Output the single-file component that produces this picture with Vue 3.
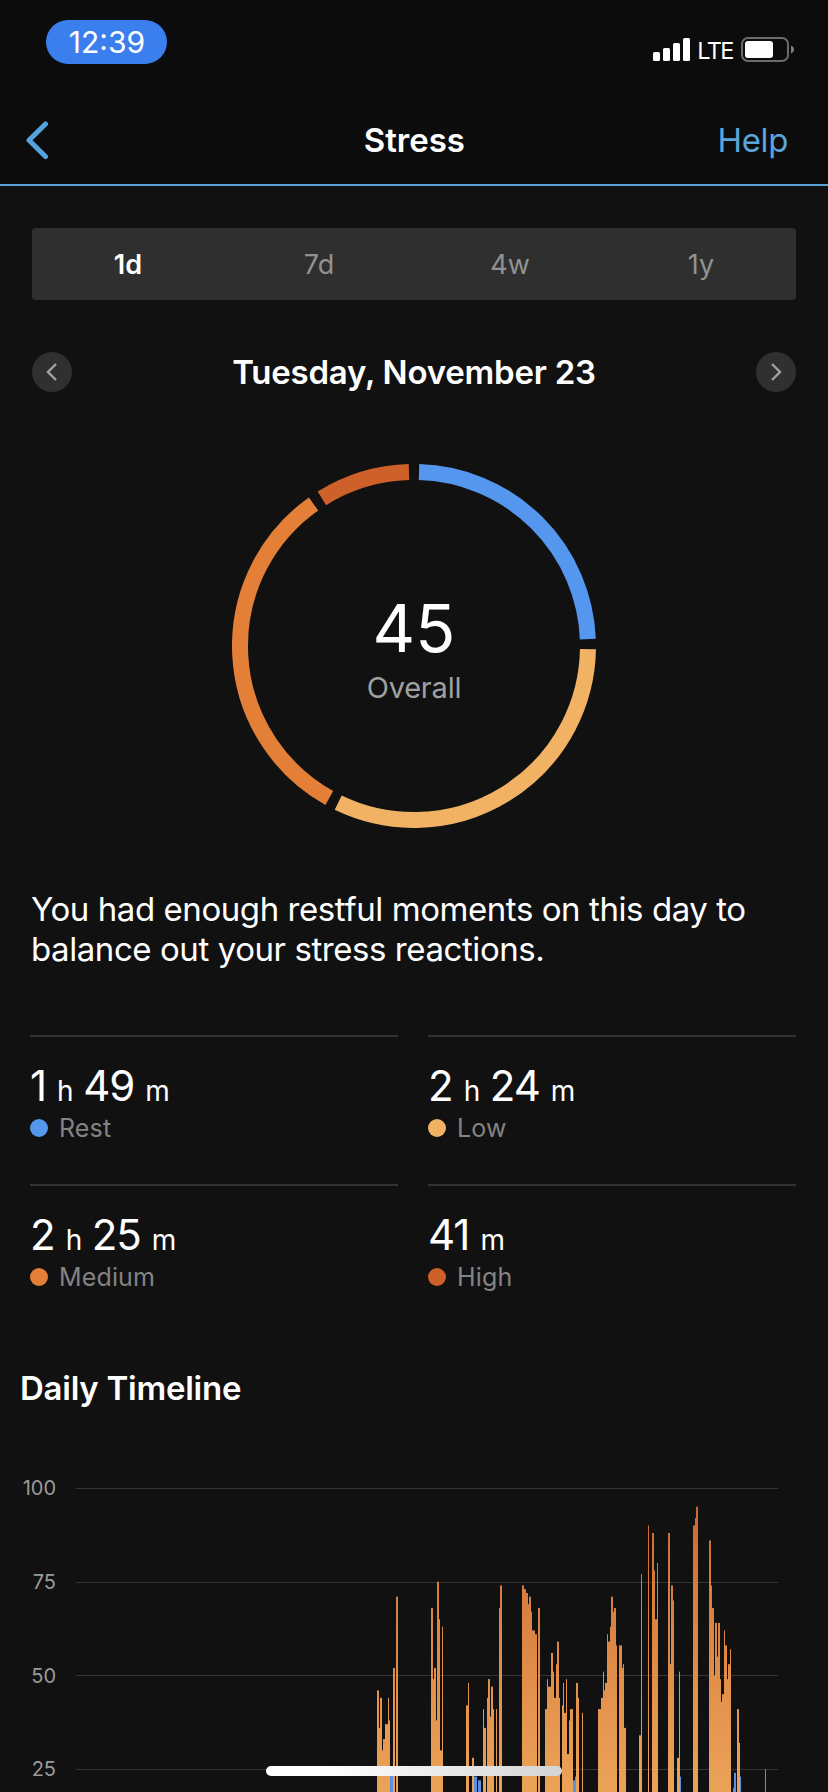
<template>
  <div class="screen">

    <!-- Status bar -->
    <div class="status-bar">
      <div class="time-pill"><span class="time">12:39</span></div>
      <div class="status-right">
        <svg class="signal" width="37" height="23" viewBox="0 0 37 23">
          <rect x="0" y="14" width="7" height="9" rx="1.5" />
          <rect x="10" y="10" width="7" height="13" rx="1.5" />
          <rect x="20" y="5" width="7" height="18" rx="1.5" />
          <rect x="30" y="0" width="7" height="23" rx="1.5" />
        </svg>
        <span class="carrier">LTE</span>
        <svg class="battery" width="54" height="25" viewBox="0 0 54 25">
          <rect x="1" y="1" width="46" height="23" rx="6" fill="none" stroke="#6b6b6b" stroke-width="2" />
          <rect x="4" y="4" width="28" height="17" rx="3" fill="#fff" />
          <path d="M50 8.5c2 .8 3 2.2 3 4s-1 3.2-3 4z" fill="#7d7d7d" />
        </svg>
      </div>
    </div>

    <!-- Navigation -->
    <div class="nav">
      <svg class="back" width="24" height="40" viewBox="0 0 24 40">
        <path d="M20.5 4L4 20.3L20.5 36.5" fill="none" stroke="#54a4dc" stroke-width="5" stroke-linecap="round" stroke-linejoin="round" />
      </svg>
      <span class="title">Stress</span>
      <span class="help">Help</span>
    </div>

    <!-- Range tabs -->
    <div class="range-tabs">
      <div
        v-for="tab in tabs"
        :key="tab"
        class="range-tab"
        :class="{ active: activeTab === tab }"
        @click="activeTab = tab"
      >
        {{ tab }}
      </div>
    </div>

    <!-- Date -->
    <div class="date-row">
      <div class="round-btn">
        <svg width="12" height="18" viewBox="0 0 12 18"><path d="M10 1L2 9L10 17" /></svg>
      </div>
      <span class="date">Tuesday, November 23</span>
      <div class="round-btn">
        <svg width="12" height="18" viewBox="0 0 12 18"><path d="M2 1L10 9L2 17" /></svg>
      </div>
    </div>

    <!-- Stress ring -->
    <div class="ring">
      <svg width="364" height="364" viewBox="0 0 364 364">
        <path
          v-for="seg in segments"
          :key="seg.label"
          :d="seg.d"
          :stroke="seg.color"
          stroke-width="16"
          fill="none"
        />
      </svg>
      <div class="ring-text">
        <div class="score">45</div>
        <div class="score-label">Overall</div>
      </div>
    </div>

    <p class="summary">You had enough restful moments on this day to balance out your stress reactions.</p>

    <!-- Durations -->
    <div class="stats">
      <div v-for="item in levels" :key="item.label" class="stat">
        <div class="stat-value">
          <template v-if="item.h"><span class="num">{{ item.h }}</span><span class="unit unit-h">h</span></template>
          <span class="num">{{ item.m }}</span><span class="unit">m</span>
        </div>
        <div class="stat-label">
          <i class="dot" :style="{ backgroundColor: item.color }"></i>
          <span>{{ item.label }}</span>
        </div>
      </div>
    </div>

    <!-- Timeline -->
    <h2 class="section-title">Daily Timeline</h2>
    <div class="chart">
      <div class="axis">
        <span v-for="n in ticks" :key="n">{{ n }}</span>
      </div>
      <svg class="plot" width="702" height="304" viewBox="0 0 702 304">
        <defs>
          <linearGradient id="stress" gradientUnits="userSpaceOnUse" x1="0" y1="0" x2="0" y2="304">
            <stop offset="0" stop-color="#cb6130" />
            <stop offset="0.35" stop-color="#d87d3f" />
            <stop offset="0.7" stop-color="#e3934c" />
            <stop offset="1" stop-color="#eba358" />
          </linearGradient>
        </defs>
        <rect v-for="n in ticks" :key="n" x="0" :y="Math.round(yOf(n))" width="702" height="1" fill="#343434" />
        <rect v-for="(b, i) in stressBars" :key="'s' + i" :x="b[0]" :y="yOf(b[2])" :width="b[1]" height="400" fill="url(#stress)" />
        <rect v-for="(b, i) in restBars" :key="'r' + i" :x="b[0]" :y="yOf(b[2])" :width="b[1]" height="400" fill="#5b92e0" />
      </svg>
    </div>

    <div class="home-indicator"></div>
  </div>
</template>

<script setup>
import { computed, ref } from 'vue';

const tabs = ['1d', '7d', '4w', '1y'];
const activeTab = ref('1d');
const ticks = [100, 75, 50, 25];

const levels = [
  { label: 'Rest', h: 1, m: 49, color: '#5596ee' },
  { label: 'Low', h: 2, m: 24, color: '#f1b264' },
  { label: 'Medium', h: 2, m: 25, color: '#e47f37' },
  { label: 'High', h: 0, m: 41, color: '#ce6029' }
];

const point = (deg) => {
  const a = (deg * Math.PI) / 180;
  return `${(182 + 174 * Math.sin(a)).toFixed(2)} ${(182 - 174 * Math.cos(a)).toFixed(2)}`;
};

// ring segments, proportional to minutes, with a small gap
const segments = computed(() => {
  const gap = 1.65;
  const minutes = levels.map(l => l.h * 60 + l.m);
  const total = minutes.reduce((a, b) => a + b, 0);
  let start = 0;
  return levels.map((l, i) => {
    const end = start + (minutes[i] / total) * 360;
    const d = `M${point(start + gap)}A174 174 0 0 1 ${point(end - gap)}`;
    start = end;
    return { label: l.label, color: l.color, d };
  });
});

const yOf = (v) => (100 - v) * 3.748;

// [x, width, stress level]
const stressBars = [
  [301, 2, 46], [303, 1, 36], [304, 2, 44], [306, 1, 30], [307, 2, 33], [309, 3, 37], [312, 1, 44], [313, 1, 38],
  [317, 2, 52], [320, 2, 71],
  [355, 2, 68], [357, 1, 49], [358, 2, 52], [360, 1, 38], [361, 2, 75], [363, 1, 65], [364, 2, 30], [366, 1, 63],
  [390, 2, 42], [392, 1, 48], [396, 2, 28],
  [407, 1, 41], [408, 2, 36], [411, 1, 44], [412, 2, 49], [414, 1, 39], [415, 2, 47], [417, 1, 41], [420, 1, 41],
  [423, 1, 68], [424, 2, 74],
  [446, 2, 74], [448, 2, 73], [450, 2, 72], [452, 1, 69], [453, 2, 71], [455, 1, 67], [456, 3, 62], [459, 2, 61], [462, 2, 68],
  [469, 2, 41], [471, 1, 49], [472, 3, 47], [475, 2, 56], [477, 1, 51], [478, 2, 44], [480, 1, 53], [481, 2, 59], [483, 1, 44],
  [486, 1, 42], [487, 1, 48], [488, 2, 40], [490, 1, 49], [491, 2, 29], [493, 1, 38], [494, 3, 41],
  [500, 2, 48], [502, 1, 44], [506, 1, 40],
  [522, 3, 41], [525, 2, 44], [527, 1, 51], [528, 1, 46], [529, 2, 48], [531, 1, 61], [532, 2, 59], [534, 1, 63], [535, 2, 71],
  [537, 1, 67], [538, 2, 68], [540, 1, 58], [543, 3, 58], [546, 1, 52], [547, 1, 53], [548, 2, 36],
  [563, 2, 34], [565, 1, 77], [572, 1, 90],
  [576, 2, 88], [578, 1, 78], [579, 2, 65], [581, 1, 80],
  [592, 2, 88], [594, 1, 53], [595, 2, 74], [597, 1, 70], [601, 2, 28], [603, 1, 51],
  [617, 2, 90], [619, 1, 92], [620, 2, 95],
  [633, 2, 86], [635, 1, 74], [636, 2, 68], [638, 1, 50], [639, 2, 64], [641, 1, 55], [642, 2, 64], [644, 1, 49], [645, 1, 43],
  [646, 2, 45], [648, 1, 62], [649, 2, 58], [651, 1, 49], [652, 2, 53], [654, 1, 57],
  [661, 2, 41], [663, 1, 32]
];

const restBars = [
  [314, 3, 25], [398, 3, 23], [402, 3, 22], [497, 2, 22], [499, 1, 23],
  [604, 1, 23], [657, 1, 20], [658, 2, 24], [664, 1, 23], [689, 1, 25]
];
</script>

<style>
body {
  margin: 0;
  background-color: #111;
}
</style>

<style scoped>
.screen {
  position: relative;
  width: 828px;
  height: 1792px;
  overflow: hidden;
  background-color: #111;
  color: #fff;
  font-family: Inter, 'Liberation Sans', sans-serif;
}

/* Status bar */
.status-bar {
  display: flex;
  justify-content: space-between;
  height: 96px;
  padding: 20px 33px 0 46px;
  box-sizing: border-box;
  background-color: #0c0c0c;
}
.time-pill {
  width: 121px;
  height: 44px;
  padding-left: 1px;
  box-sizing: border-box;
  line-height: 45px;
  border-radius: 22px;
  background-color: #3b7eee;
  text-align: center;
  font-size: 30px;
}
.status-right {
  display: flex;
  align-items: flex-start;
}
.signal {
  margin-top: 18px;
  fill: #fff;
}
.carrier {
  margin: 19px 8px 0 7px;
  line-height: 24px;
  font-size: 23.5px;
  letter-spacing: -1.5px;
}
.battery {
  margin-top: 17px;
}

/* Navigation */
.nav {
  display: flex;
  align-items: center;
  justify-content: space-between;
  height: 90px;
  padding: 0 40px 0 25px;
  box-sizing: border-box;
  border-bottom: 2px solid #5ba3d6;
  background-color: #0c0c0c;
  line-height: 40px;
  font-size: 33px;
}
.nav > * {
  flex: none;
}
.title {
  margin-left: 62px;
  font-weight: 600;
}
.help {
  letter-spacing: -0.4px;
  color: #5aa5dc;
}

/* Range tabs */
.range-tabs {
  display: flex;
  height: 72px;
  margin: 42px 32px 0;
  border-radius: 4px;
  background-color: #2f2f2f;
}
.range-tab {
  flex: 1;
  padding-left: 1px;
  line-height: 74px;
  text-align: center;
  font-size: 27px;
  color: #929292;
}
.range-tab.active {
  font-weight: 600;
  color: #fff;
}

/* Date */
.date-row {
  display: flex;
  align-items: center;
  justify-content: space-between;
  height: 40px;
  margin: 52px 32px 0;
}
.round-btn {
  display: flex;
  align-items: center;
  justify-content: center;
  width: 40px;
  height: 40px;
  border-radius: 50%;
  background-color: #303030;
}
.round-btn path {
  fill: none;
  stroke: #a3a3a3;
  stroke-width: 2.4;
}
.date {
  font-size: 33px;
  font-weight: 600;
  letter-spacing: -0.22px;
}

/* Ring */
.ring {
  display: grid;
  place-items: center;
  height: 364px;
  margin-top: 72px;
}
.ring > * {
  grid-area: 1 / 1;
}
.ring-text {
  padding-top: 4px;
  text-align: center;
}
.score {
  line-height: 80px;
  font-size: 66px;
}
.score-label {
  line-height: 40px;
  font-size: 29px;
  letter-spacing: -0.2px;
  color: #a0a0a0;
}

.summary {
  width: 760px;
  margin: 61px 0 0 31px;
  line-height: 40px;
  font-size: 33px;
  letter-spacing: -0.43px;
}

/* Durations */
.stats {
  display: grid;
  grid-template-columns: 368px 368px;
  column-gap: 30px;
  margin: 66px 0 0 30px;
}
.stat {
  height: 149px;
  box-sizing: border-box;
  border-top: 2px solid #333;
  padding-top: 24px;
}
.stat-value {
  display: flex;
  align-items: baseline;
  height: 50px;
  line-height: 50px;
}
.num {
  font-size: 42px;
  letter-spacing: -1px;
}
.unit {
  margin-left: 11px;
  font-size: 28px;
}
.unit-h {
  margin-right: 9.5px;
}
.stat-label {
  display: flex;
  align-items: center;
  gap: 11px;
  height: 34px;
  font-size: 25px;
  letter-spacing: 0.15px;
  color: #838383;
}
.dot {
  width: 18px;
  height: 18px;
  border-radius: 50%;
}

/* Timeline */
.section-title {
  margin: 35px 0 0 20px;
  line-height: 40px;
  font-size: 33px;
  font-weight: 600;
  letter-spacing: -0.25px;
}
.chart {
  display: flex;
  margin-top: 80px;
}
.axis {
  display: flex;
  flex-direction: column;
  gap: 68.8px;
  width: 56px;
  height: 304px;
  margin: -12px 20px 0 0;
  text-align: right;
  line-height: 25px;
  font-size: 20px;
  color: #9a9a9a;
}

.home-indicator {
  position: absolute;
  left: 266px;
  top: 1766px;
  width: 296px;
  height: 10px;
  border-radius: 5px;
  background: linear-gradient(90deg, #fff 0%, #fff 22%, #ececec 55%, #d4d4d4 100%);
}
</style>
